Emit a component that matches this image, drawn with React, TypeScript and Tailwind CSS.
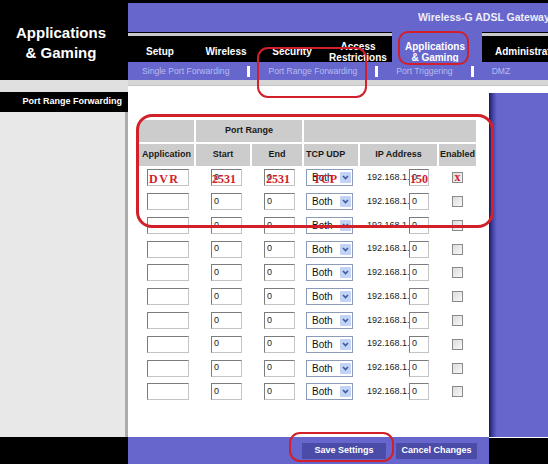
import React from 'react';

const COLS = 'grid grid-cols-[55px_54px_50px_54px_77px_37px] gap-x-[2px]';
const BOX =
  'h-[17px] bg-white border border-t-[#7c7c7c] border-l-[#7c7c7c] border-r-[#c4c4c4] border-b-[#c4c4c4] relative flex items-center';
const RED = "font-['Liberation_Serif',serif] font-bold text-[#d2202a] text-[12px] leading-none";

function Chevron() {
  return (
    <svg width="7" height="5" viewBox="0 0 7 5" fill="none">
      <path d="M1 1l2.5 2.5L6 1" stroke="#3d5a9c" strokeWidth="1.6" />
    </svg>
  );
}

function Row({ first }: { first?: boolean }) {
  return (
    <div className={`${COLS} h-[23.78px] items-center text-[9px] text-[#222]`}>
      <div>
        <div className={`${BOX} ml-[8px] w-[42px] pl-[1px]`}>
          {first && <span className={`${RED} tracking-[1.5px] pt-[3px]`}>DVR</span>}
        </div>
      </div>
      <div>
        <div className={`${BOX} ml-[15px] w-[31px] pl-[2px]`}>
          <span>0</span>
          {first && <span className={`${RED} absolute left-0 top-[3px]`}>2531</span>}
        </div>
      </div>
      <div>
        <div className={`${BOX} ml-[12px] w-[31px] pl-[2px]`}>
          <span>0</span>
          {first && <span className={`${RED} absolute left-[1px] top-[3px]`}>2531</span>}
        </div>
      </div>
      <div>
        <div className="ml-[2px] w-[47px] h-[17px] border border-[#8b9bb8] bg-white relative flex items-center justify-between pl-[5px] pr-[1px]">
          <span className="text-[10px] text-[#111]">Both</span>
          {first && <span className={`${RED} absolute left-[6px] top-[3px]`}>TCP</span>}
          <span className="w-[11px] h-[11px] bg-[#c3d3f5] rounded-[1px] flex items-center justify-center">
            <Chevron />
          </span>
        </div>
      </div>
      <div className="flex items-center pl-[7px]">
        <span className="w-[42px] whitespace-nowrap">192.168.1.</span>
        <div className={`${BOX} w-[20px] pl-[2px]`}>
          <span>0</span>
          {first && <span className={`${RED} absolute left-0 top-[3px]`}>150</span>}
        </div>
      </div>
      <div>
        <div className="ml-[13px] w-[11px] h-[11px] border border-[#8a8a8a] bg-[linear-gradient(135deg,#dcdcdc,#f8f8f8)] flex items-center justify-center">
          {first && <span className={`${RED} text-[10px] -mt-[2px]`}>x</span>}
        </div>
      </div>
    </div>
  );
}

function Tab({ w, children }: { w: string; children: React.ReactNode }) {
  return (
    <div
      className={`${w} mt-[1px] border-t-[3px] border-[#c8c8cc] flex items-center justify-center pt-[5px] text-center leading-[11px]`}
    >
      {children}
    </div>
  );
}

function Sep() {
  return <span className="w-[3px] h-[11px] bg-white" />;
}

export default function App() {
  return (
    <div className="w-[548px] h-[464px] overflow-hidden relative flex bg-black font-['Liberation_Sans',Arial,sans-serif]">
      {/* left column */}
      <aside className="w-[128px] shrink-0 flex flex-col">
        <div className="h-[80px] bg-black text-white text-[15px] font-bold leading-[20px] text-center pt-[23px] pr-[6px]">
          Applications
          <br />& Gaming
        </div>
        <div className="h-[12px] bg-[#e0e0e0]" />
        <div className="h-[20px] bg-black text-white text-[9px] font-bold flex items-center justify-end pr-[6px]">
          Port Range Forwarding
        </div>
        <div className="flex-1 bg-[#e8e8e8] border-r-[3px] border-[#acacac]" />
        <div className="h-[27px] bg-black" />
      </aside>

      {/* right part */}
      <div className="flex-1 min-w-0 flex flex-col">
        <div className="h-[3px] bg-black" />
        <div className="h-[29px] bg-[#6666cc] flex items-center pl-[290px] pt-[1px] text-[10.5px] font-bold text-[#eeeefa] whitespace-nowrap overflow-hidden">
          Wireless-G ADSL Gateway
        </div>

        <nav className="h-[30px] bg-black flex text-white text-[10px] font-bold">
          <Tab w="w-[64px]">Setup</Tab>
          <Tab w="w-[68px]">Wireless</Tab>
          <Tab w="w-[64px]">Security</Tab>
          <Tab w="w-[68px]">
            Access
            <br />
            Restrictions
          </Tab>
          <div className="w-[90px] bg-[#6666cc] flex items-center justify-center pt-[9px] pr-[4px] text-center leading-[11px]">
            Applications
            <br />& Gaming
          </div>
          <div className="flex-1 mt-[1px] border-t-[3px] border-[#c8c8cc] flex items-center pl-[13px] pt-[5px] whitespace-nowrap overflow-hidden">
            Administration
          </div>
        </nav>

        <div className="h-[18px] bg-[#6666cc] flex items-center gap-[18px] pl-[14px] text-[8.6px] text-[#b6bdf0] whitespace-nowrap">
          <span>Single Port Forwarding</span>
          <Sep />
          <span>Port Range Forwarding</span>
          <Sep />
          <span>Port Triggering</span>
          <Sep />
          <span>DMZ</span>
        </div>
        <div className="h-[6px] bg-[#d6d6d6] border-b border-[#c4c4c4]" />

        <div className="flex-1 min-h-0 flex">
          <main className="w-[361px] bg-white pt-[34px] pl-[11px]">
            <div className={`${COLS} gap-y-[2px] text-[9px] font-bold text-[#1a1a1a]`}>
              <div className="h-[22px] bg-[#cccccc]" />
              <div className="col-span-2 h-[22px] bg-[#cccccc] flex items-center justify-center">Port Range</div>
              <div className="col-span-3 h-[22px] bg-[#cccccc]" />
              <div className="h-[22px] bg-[#cccccc] flex items-center justify-center">Application</div>
              <div className="h-[22px] bg-[#cccccc] flex items-center justify-center">Start</div>
              <div className="h-[22px] bg-[#cccccc] flex items-center justify-center">End</div>
              <div className="h-[22px] bg-[#cccccc] flex items-center pl-[2px]">TCP UDP</div>
              <div className="h-[22px] bg-[#cccccc] flex items-center justify-center">IP Address</div>
              <div className="h-[22px] bg-[#cccccc] flex items-center justify-center">Enabled</div>
            </div>
            {Array.from({ length: 10 }).map((_, i) => (
              <Row key={i} first={i === 0} />
            ))}
          </main>
          <div className="flex-1 bg-white pt-[7px] flex flex-col">
            <div className="flex-1 bg-[linear-gradient(to_right,#1a1a4a_0px,#3c3ca0_3px,#6666cc_8px)]" />
          </div>
        </div>

        <div className="h-[27px] flex">
          <div className="w-[361px] bg-[#6666cc] flex items-center justify-end gap-[10px] pr-[12px] text-white text-[9px] font-bold">
            <button className="w-[84px] h-[16px] bg-[#4b4ba8]">Save Settings</button>
            <button className="w-[81px] h-[16px] bg-[#4b4ba8]">Cancel Changes</button>
          </div>
          <div className="flex-1 bg-black border-t border-white" />
        </div>
      </div>

      {/* hand-drawn red marks */}
      <div className="absolute left-[257px] top-[47px] w-[110px] h-[51px] border-[2.5px] border-[#d2202a] rounded-[11px]" />
      <div className="absolute left-[398px] top-[31px] w-[71px] h-[34px] border-[2.5px] border-[#d2202a] rounded-[10px]" />
      <div className="absolute left-[136px] top-[114px] w-[358px] h-[114px] border-[3px] border-[#d2202a] rounded-[16px]" />
      <div className="absolute left-[289px] top-[432px] w-[105px] h-[30px] border-[2.5px] border-[#d2202a] rounded-[11px]" />
    </div>
  );
}
